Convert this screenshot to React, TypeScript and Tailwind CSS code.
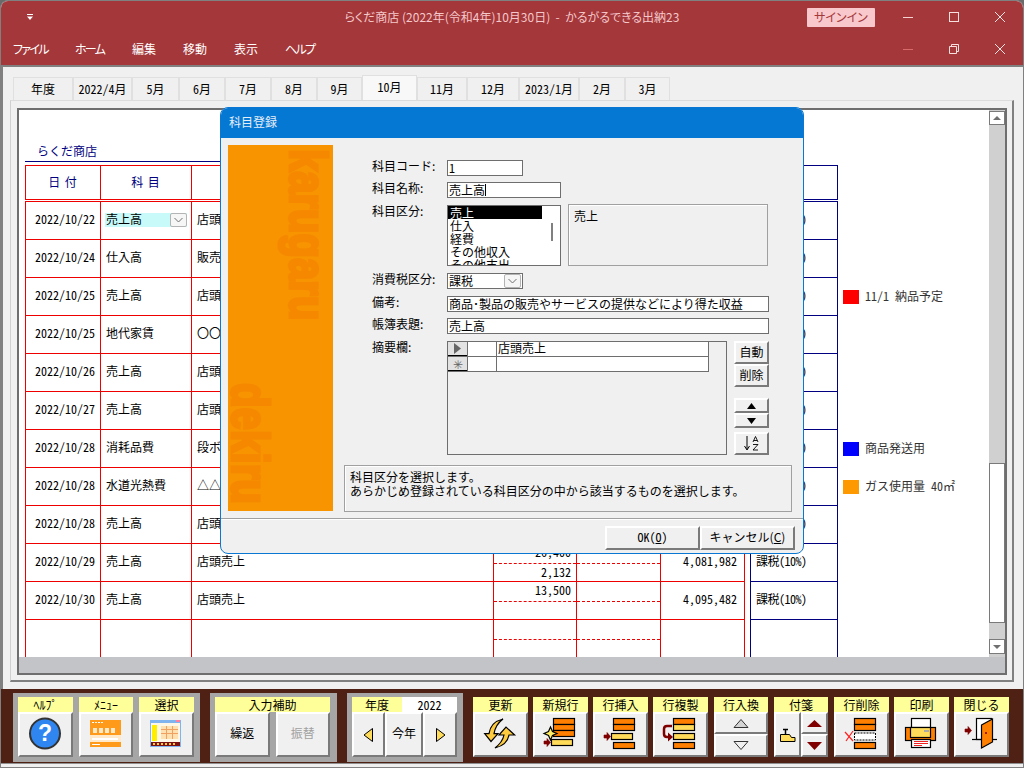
import type { ReactNode } from "react";

const hw = "[font-feature-settings:'hwid']";
const raised = "border-2 border-t-white border-l-white border-r-[#7a7a7a] border-b-[#7a7a7a] bg-[#f0f0f0]";

const tabs = [
  ["年度", "w-[60px]"],
  ["2022/4月", "w-[59px]"],
  ["5月", "w-[47px]"],
  ["6月", "w-[46px]"],
  ["7月", "w-[46px]"],
  ["8月", "w-[46px]"],
  ["9月", "w-[45px]"],
  ["10月", "w-[55px]"],
  ["11月", "w-[50px]"],
  ["12月", "w-[52px]"],
  ["2023/1月", "w-[60px]"],
  ["2月", "w-[46px]"],
  ["3月", "w-[45px]"],
];

const rows = [
  { date: "2022/10/22", acc: "売上高", memo: "店頭売上", combo: true },
  { date: "2022/10/24", acc: "仕入高", memo: "販売用商品" },
  { date: "2022/10/25", acc: "売上高", memo: "店頭売上", mark: "bg-[#ff0000]", note: "11/1 納品予定" },
  { date: "2022/10/25", acc: "地代家賃", memo: "〇〇不動産" },
  { date: "2022/10/26", acc: "売上高", memo: "店頭売上" },
  { date: "2022/10/27", acc: "売上高", memo: "店頭売上" },
  { date: "2022/10/28", acc: "消耗品費", memo: "段ボール", mark: "bg-[#0000ff]", note: "商品発送用" },
  { date: "2022/10/28", acc: "水道光熱費", memo: "△△ガス", mark: "bg-[#ff9900]", note: "ガス使用量 40㎡" },
  { date: "2022/10/28", acc: "売上高", memo: "店頭売上" },
  { date: "2022/10/29", acc: "売上高", memo: "店頭売上", top: "26,400", bottom: "2,132", total: "4,081,982" },
  { date: "2022/10/30", acc: "売上高", memo: "店頭売上", top: "13,500", total: "4,095,482" },
  { date: "", acc: "", memo: "", empty: true },
];

const Chevron = () => (
  <span className="flex h-[14px] w-[17px] shrink-0 items-center justify-center rounded-[2px] border border-[#b4b4b4] bg-[#f6f6f6]">
    <svg width="9" height="6" viewBox="0 0 9 6" fill="none" stroke="#707070">
      <path d="M0.5 1l4 4 4-4" />
    </svg>
  </span>
);

const Row = ({ r }: { r: (typeof rows)[number] }) => (
  <div className="flex h-[38px] shrink-0">
    <div className="flex border-b border-[#ee0000]">
      <div className={`flex w-[76px] items-center border-x border-[#ee0000] pb-[3px] pl-[9px] ${hw}`}>{r.date}</div>
      <div className={`flex w-[91px] items-center border-r border-[#ee0000] pl-[5px] ${r.combo ? "" : "pb-[3px]"}`}>
        {r.combo ? (
          <div className="-ml-px -mt-[2px] flex h-[14px] w-[82px] items-center justify-between bg-[#c8fafa] pl-px">
            <span className="pb-px">{r.acc}</span>
            <Chevron />
          </div>
        ) : (
          r.acc
        )}
      </div>
      <div className="flex w-[302px] items-center border-r border-[#ee0000] pb-[3px] pl-[5px]">{r.memo}</div>
      <div className={`flex w-[83px] flex-col border-r border-[#ee0000] text-right ${hw}`}>
        <div className="h-[20px] border-b border-dashed border-[#ee0000] pr-[5px] leading-[16px]">{r.top}</div>
        <div className="pr-[5px] leading-[15px]">{r.bottom}</div>
      </div>
      <div className="flex w-[84px] flex-col border-r border-[#ee0000]">
        <div className="h-[20px] border-b border-dashed border-[#ee0000]" />
      </div>
      <div className={`flex w-[84px] items-center justify-end border-r border-[#ee0000] pb-[3px] pr-[7px] ${hw}`}>{r.total}</div>
    </div>
    <div className={`ml-[5px] flex w-[88px] items-center border-x border-b border-[#000080] pb-[3px] pl-[5px] tracking-[-0.5px] ${hw}`}>
      {r.empty ? "" : "課税(10%)"}
    </div>
    {r.note && (
      <div className="ml-[5px] flex items-center text-[#333333]">
        <span className={`mr-[6px] h-[14px] w-[16px] ${r.mark}`} />
        <span className={`pb-[3px] ${hw}`}>{r.note}</span>
      </div>
    )}
  </div>
);

const Field = ({ label, className, children }: { label: string; className: string; children: ReactNode }) => (
  <div className={`flex ${className}`}>
    <div className="-mt-px w-[75px] shrink-0 leading-[13px]">{label}</div>
    {children}
  </div>
);

const boxIn = "h-[16px] border border-[#6e6e6e] bg-white pl-px leading-[13px]";

const Tool = ({ label, children, className = "w-[55px]" }: { label: string; children: ReactNode; className?: string }) => (
  <div className={`flex flex-col ${className}`}>
    <div className="flex h-[15px] items-center justify-center bg-[#ffff99] leading-none">{label}</div>
    <div className="flex h-[45px]">{children}</div>
  </div>
);

const Btn = ({ children, className = "" }: { children?: ReactNode; className?: string }) => (
  <div className={`flex min-w-0 flex-1 items-center justify-center overflow-visible ${raised} ${className}`}>{children}</div>
);

const Icon = ({ children }: { children: ReactNode }) => (
  <svg className="-m-[2px] block h-[45px] w-[55px] shrink-0" viewBox="0 0 55 45" stroke="#000" strokeWidth="1.2">
    {children}
  </svg>
);

const OR = "#ff8000";
const YL = "#ffdc5a";
const Arrow = ({ x, y }: { x: number; y: number }) => (
  <path d={`M${x} ${y - 1.5}h3v-2.5l3.5 4-3.5 4v-2.5h-3z`} fill="#800000" stroke="#800000" strokeWidth="0.6" />
);

const WinBtns = ({ menu }: { menu?: boolean }) => (
  <div className="flex">
    <div className="flex h-[32px] w-[46px] items-center justify-center">
      <svg width="10" height="10" stroke={menu ? "#d96a6a" : "#f6d3d3"}>
        <path d="M0 5.5h10" />
      </svg>
    </div>
    <div className="flex h-[32px] w-[46px] items-center justify-center">
      <svg width="10" height="10" fill="none" stroke="#f6e0e0">
        {menu ? (
          <path d="M0.5 2.5h7v7h-7zM2.5 2.5v-2h7v7h-2" />
        ) : (
          <rect x="0.5" y="0.5" width="9" height="9" />
        )}
      </svg>
    </div>
    <div className="flex h-[32px] w-[46px] items-center justify-center">
      <svg width="10" height="10" stroke="#f6e0e0">
        <path d="M0 0l10 10M10 0L0 10" />
      </svg>
    </div>
  </div>
);

export default function App() {
  return (
    <div className="relative h-[768px] w-[1024px] overflow-hidden bg-[#6a6a6a] font-['Noto_Sans_CJK_JP',sans-serif] text-[12px] text-black">
      <div className="flex h-full flex-col rounded-t-[8px] border border-[#808080] bg-[#f0f0f0]">
        {/* title */}
        <div className="grid h-[32px] shrink-0 grid-cols-[1fr_auto_1fr] rounded-t-[7px] bg-[#a4373a] text-[12px] text-[#f4c8ca]">
          <div className="flex items-center pl-[26px]">
            <svg width="6" height="7" fill="#fff">
              <path d="M0 0h6v1H0zM0 2.5h6L3 6z" />
            </svg>
          </div>
          <div className="flex items-center justify-center whitespace-pre [font-feature-settings:'palt']">
            らくだ商店 (2022年(令和4年)10月30日)  -  かるがるできる出納23
          </div>
          <div className="flex items-center justify-end">
            <div className="mr-[10px] flex h-[19px] w-[68px] items-center justify-center rounded-[1px] bg-[#f8c8cc] pb-px text-[12px] text-[#a4373a] [font-feature-settings:'palt']">
              サインイン
            </div>
            <WinBtns />
          </div>
        </div>
        {/* menu */}
        <div className="flex h-[32px] shrink-0 items-center justify-between bg-[#a4373a] text-white">
          <div className="flex pb-px pl-[12px] text-[12px] [font-feature-settings:'palt']">
            <span className="w-[62px] tracking-[-1.7px]">ファイル</span>
            <span className="w-[57px] tracking-[-1.7px]">ホーム</span>
            <span className="w-[51px]">編集</span>
            <span className="w-[51px]">移動</span>
            <span className="w-[51px]">表示</span>
            <span className="tracking-[-1.7px]">ヘルプ</span>
          </div>
          <WinBtns menu />
        </div>
        {/* main */}
        <div className="flex min-h-0 flex-1 flex-col border-t-2 border-l-2 border-[#808080] pt-[8px]">
          <div className="flex h-[25px] shrink-0 items-end pl-[10px]">
            {tabs.map(([t, w]) => (
              <div
                key={t}
                className={`flex items-center justify-center border-x border-t border-[#e0e0e0] ${hw} ${w} ${
                  t === "10月" ? "h-[25px] bg-[#f8f8f8] pb-[2px]" : "h-[23px] bg-[#f0f0f0]"
                }`}
              >
                {t}
              </div>
            ))}
          </div>
          <div className="mb-[7px] ml-[7px] mr-[9px] flex min-h-0 flex-1 flex-col border-t border-l border-t-[#dcdcdc] border-l-[#d0d0d0] border-r-2 border-b-2 border-r-[#808080] border-b-[#808080] pt-[7px] pr-[5px] pb-[5px] pl-[6px]">
            <div className="flex min-h-0 flex-1 flex-col border-2 border-[#6e6e6e] bg-white">
              <div className="flex min-h-0 flex-1">
                <div className="min-w-0 flex-1 overflow-hidden pl-[6px]">
                  <div className="flex h-[52px] w-[600px] items-end border-b border-[#000080] pb-[2px] pl-[12px] leading-[16px] text-[#000080]">
                    らくだ商店
                  </div>
                  <div className="mt-[3px] flex h-[35px]">
                    <div className="flex border-y border-[#ee0000] text-[#000080]">
                      <div className="flex w-[76px] items-center justify-center border-x border-[#ee0000] pb-[2px] tracking-[1px]">日 付</div>
                      <div className="flex w-[91px] items-center justify-center border-r border-[#ee0000] pb-[2px] tracking-[1px]">科 目</div>
                      <div className="w-[302px] border-r border-[#ee0000]" />
                      <div className="w-[83px] border-r border-[#ee0000]" />
                      <div className="w-[84px] border-r border-[#ee0000]" />
                      <div className="w-[84px] border-r border-[#ee0000]" />
                    </div>
                    <div className="ml-[5px] flex w-[88px] items-center border border-[#000080] pb-[2px] pl-[5px] text-[#000080]">課税区分</div>
                  </div>
                  <div className="mt-px flex h-px w-[720px] bg-[#ee0000]" />
                  <div className="-mt-px ml-[725px] h-px w-[88px] bg-[#000080]" />
                  {rows.map((r, i) => (
                    <Row key={i} r={r} />
                  ))}
                </div>
                <div className="flex w-[16px] shrink-0 flex-col bg-[#d0d0d0]">
                  <div className="mt-px flex h-[14px] items-center justify-center border border-[#7a7a7a] bg-white">
                    <svg width="8" height="4" fill="#707070">
                      <path d="M4 0l4 4H0z" />
                    </svg>
                  </div>
                  <div className="mt-[338px] h-[160px] border border-[#7a7a7a] bg-white" />
                  <div className="mt-[16px] flex h-[15px] items-center justify-center border border-[#7a7a7a] bg-white">
                    <svg width="8" height="4" fill="#707070">
                      <path d="M4 4l4-4H0z" />
                    </svg>
                  </div>
                </div>
              </div>
              <div className="h-[16px] shrink-0 bg-[#c3c4c8]" />
            </div>
          </div>
        </div>
        {/* toolbar */}
        <div className="flex h-[74px] shrink-0 gap-[10px] bg-[#4f2114] pl-[12px] pt-[4px]">
          <div className="flex h-[69px] w-[187px] gap-[6px] bg-[#a6a6a6] px-[5px] pt-[4px]">
            <Tool label="ﾍﾙﾌﾟ">
              <Btn>
                <Icon>
                  <circle cx="27" cy="21.5" r="15" fill="#2f86f0" stroke="#333" strokeWidth="2" />
                  <text x="27" y="29" textAnchor="middle" fill="#fff" stroke="none" fontSize="23" fontWeight="700" fontFamily="Liberation Sans">?</text>
                </Icon>
              </Btn>
            </Tool>
            <Tool label="ﾒﾆｭｰ" className="w-[54px]">
              <Btn>
                <Icon>
                  <g stroke="none">
                    <rect x="11" y="8" width="31" height="27" fill="#ffe9c8" />
                    <rect x="11" y="8" width="31" height="15" fill="#ff9a1a" />
                    <path d="M13 10h2v1h-2zM16 10h2v1h-2zM19 10h2v1h-2zM22 10h2v1h-2z" fill="#fff" />
                    <path d="M14 16h4v5h-4zM20 16h4v5h-4zM26 16h4v5h-4zM32 16h4v5h-4z" fill="#ffe9c8" />
                    <rect x="11" y="30" width="31" height="5" fill="#ff9a1a" />
                    <rect x="13" y="26" width="26" height="2" fill="#fff" />
                    <rect x="13" y="32" width="8" height="1" fill="#fff" />
                  </g>
                </Icon>
              </Btn>
            </Tool>
            <Tool label="選択">
              <Btn>
                <Icon>
                  <g stroke="none">
                    <rect x="11" y="8" width="31" height="27" fill="#7fb4ee" />
                    <rect x="12" y="11" width="29" height="19" fill="#fff7e6" />
                    <rect x="13" y="13" width="5" height="16" fill="#ffee00" />
                    <path d="M22 14h17v13H22z" fill="#ffe0b0" />
                    <path d="M22 17h17v1H22zM22 21h17v1H22zM27 14h1v13h-1zM33 14h1v13h-1z" fill="#f0a060" />
                    <rect x="12" y="30" width="29" height="4" fill="#7a1010" />
                    <path d="M14 31h2v2h-2zM18 31h2v2h-2zM22 31h2v2h-2zM26 31h2v2h-2zM30 31h2v2h-2zM34 31h2v2h-2z" fill="#ffcc33" />
                    <rect x="37" y="8" width="4" height="2" fill="#ff80a0" />
                  </g>
                </Icon>
              </Btn>
            </Tool>
          </div>
          <div className="flex h-[69px] w-[127px] bg-[#a6a6a6] pl-[5px] pt-[4px]">
            <Tool label="入力補助" className="w-[115px]">
              <Btn className="mr-[6px] pb-[3px]">繰返</Btn>
              <Btn className="pb-[3px] text-[#a0a0a0]">振替</Btn>
            </Tool>
          </div>
          <div className="flex h-[69px] w-[116px] flex-col bg-[#a6a6a6] pl-[5px] pt-[4px]">
            <div className="flex h-[15px] w-[105px]">
              <div className="flex w-[50px] items-center justify-center bg-[#ffff99]">年度</div>
              <div className={`flex flex-1 items-center justify-center bg-white leading-none ${hw}`}>2022</div>
            </div>
            <div className="flex h-[45px]">
              <Btn className="w-[33px] flex-none">
                <svg width="11" height="14" fill="#ffdc5a" stroke="#000">
                  <path d="M9.5 0.5v13L1 7z" />
                </svg>
              </Btn>
              <Btn className="w-[38px] flex-none pb-[3px]">今年</Btn>
              <Btn className="w-[34px] flex-none">
                <svg width="11" height="14" fill="#ffdc5a" stroke="#000">
                  <path d="M1.5 0.5v13L10 7z" />
                </svg>
              </Btn>
            </div>
          </div>
          <div className="flex h-[69px] gap-[5px] pt-[4px]">
            <Tool label="更新">
              <Btn>
                <Icon>
                  <path d="M30 7C22 9 17 14 16 21.7h-4.3l6.3 7.8 7-7.8h-4c1-6 4-11 9-14.7z" fill="#ffcc40" />
                  <path d="M22 36c8-2 13-7 14-13h5.6l-8.6-8-7 8h5c-1 5-4 9-9 13z" fill="#ffcc40" />
                </Icon>
              </Btn>
            </Tool>
            <Tool label="新規行">
              <Btn>
                <Icon>
                  <rect x="20.5" y="6.5" width="21" height="6" fill={OR} />
                  <rect x="20.5" y="12.5" width="21" height="6" fill={OR} />
                  <rect x="20.5" y="18.5" width="21" height="6" fill={OR} />
                  <rect x="18.5" y="27.5" width="21" height="6" fill={YL} />
                  <path d="M17.5 15l2 4.5 4.5 2-4.5 2-2 4.5-2-4.5-4.5-2 4.5-2z" fill="#ffee66" />
                  <Arrow x={11} y={30.5} />
                </Icon>
              </Btn>
            </Tool>
            <Tool label="行挿入">
              <Btn>
                <Icon>
                  <rect x="20.5" y="6.5" width="21" height="6" fill={OR} />
                  <rect x="20.5" y="12.5" width="21" height="6" fill={OR} />
                  <rect x="18.5" y="21.5" width="21" height="6" fill={YL} />
                  <rect x="20.5" y="30.5" width="21" height="6" fill={OR} />
                  <Arrow x={11} y={24.5} />
                </Icon>
              </Btn>
            </Tool>
            <Tool label="行複製">
              <Btn>
                <Icon>
                  <rect x="20.5" y="6.5" width="21" height="6" fill={OR} />
                  <rect x="20.5" y="12.5" width="21" height="6" fill={YL} />
                  <rect x="20.5" y="21.5" width="21" height="6" fill={YL} />
                  <rect x="20.5" y="30.5" width="21" height="6" fill={OR} />
                  <path d="M19 14h-5q-3 0-3 3v5q0 3 3 3h1" fill="none" stroke="#800000" strokeWidth="2.5" />
                  <path d="M15 20.5l5 4.5-5 4.5z" fill="#800000" stroke="none" />
                </Icon>
              </Btn>
            </Tool>
            <Tool label="行入換" className="ml-px w-[54px]">
              <div className="flex w-full flex-col">
                <Btn className="h-[22px] flex-none">
                  <svg width="16" height="9" fill="#d4d4d4" stroke="#333">
                    <path d="M8 0.5l7 8H1z" />
                  </svg>
                </Btn>
                <Btn className="h-[23px] flex-none">
                  <svg width="16" height="9" fill="#f0f0f0" stroke="#333">
                    <path d="M8 8.5l7-8H1z" />
                  </svg>
                </Btn>
              </div>
            </Tool>
            <Tool label="付箋" className="ml-px w-[54px]">
              <Btn className="w-[27px] flex-none">
                <svg width="16" height="14" stroke="#000" fill={YL}>
                  <path d="M0.5 13.5V6.5h9l2 3h3.500v4z" />
                  <path d="M3 1.5h5M5.5 1.5v5" fill="none" strokeWidth="1.5" />
                </svg>
              </Btn>
              <div className="flex w-[27px] flex-col">
                <Btn className="h-[22px] flex-none">
                  <svg width="15" height="7" fill="#800000">
                    <path d="M7.5 0l7.5 7H0z" />
                  </svg>
                </Btn>
                <Btn className="h-[23px] flex-none">
                  <svg width="15" height="8" fill="#800000">
                    <path d="M7.5 8L15 0H0z" />
                  </svg>
                </Btn>
              </div>
            </Tool>
            <Tool label="行削除" className="ml-px w-[55px]">
              <Btn>
                <Icon>
                  <rect x="20.5" y="6.5" width="21" height="6" fill={OR} />
                  <rect x="20.5" y="12.5" width="21" height="6" fill={OR} />
                  <rect x="20.5" y="21" width="21" height="7" fill="#fff" strokeWidth="1" strokeDasharray="2 1" />
                  <rect x="20.5" y="30.5" width="21" height="6" fill={OR} />
                  <path d="M11 20l8 9M19 19l-7 10" fill="none" stroke="#ff2020" strokeWidth="1.2" />
                </Icon>
              </Btn>
            </Tool>
            <Tool label="印刷">
              <Btn>
                <Icon>
                  <rect x="17.5" y="6.5" width="19" height="10" fill="#fff" />
                  <rect x="11.5" y="15.5" width="30" height="13" fill={OR} />
                  <rect x="16.5" y="15.5" width="20" height="10" fill={YL} />
                  <path d="M30 18h5v2h-5z" fill="#aaa" stroke="none" />
                  <rect x="17.5" y="27.5" width="19" height="8" fill="#fff" />
                  <path d="M20 29.5h14M20 31.5h14M20 33.5h8" stroke="#ee2020" strokeWidth="1" fill="none" />
                </Icon>
              </Btn>
            </Tool>
            <Tool label="閉じる">
              <Btn>
                <Icon>
                  <rect x="22.5" y="6.5" width="15" height="21" fill="#fff" />
                  <path d="M18 27.5h25" />
                  <path d="M27.5 13l11-6v23l-11 6z" fill={OR} />
                  <path d="M31 21h2M32 20v2" stroke="#800000" strokeWidth="1" />
                  <Arrow x={11} y={18.5} />
                </Icon>
              </Btn>
            </Tool>
          </div>
        </div>
        <div className="h-[4px] shrink-0 border-t border-[#909090]" />
      </div>

      {/* dialog */}
      <div className="absolute left-[220px] top-[107px] flex h-[447px] w-[584px] flex-col overflow-hidden rounded-[8px] border border-[#0a78d2] bg-[#f0f0f0]">
        <div className="flex h-[30px] shrink-0 items-center bg-[#0578d3] pb-[2px] pl-[8px] text-[#e6eef8]">科目登録</div>
        <div className="flex flex-1 pl-[7px] pt-[7px]">
          <div className="relative h-[366px] w-[105px] shrink-0 overflow-hidden bg-[#f89400] font-['Liberation_Sans',sans-serif] text-[52px] font-bold leading-none text-[#f68800] [-webkit-text-stroke:3px_#f68800]">
            <div className="absolute left-[54px] top-[4px] origin-top scale-y-[0.77] whitespace-nowrap [writing-mode:vertical-rl]">karugaru</div>
            <div className="absolute left-[-4px] top-[238px] origin-top scale-y-[0.775] whitespace-nowrap [writing-mode:vertical-rl]">dekiru</div>
          </div>
          <div className="ml-[11px] flex w-[448px] flex-col">
            <div className="flex flex-col pl-[28px]">
              <Field label="科目コード:" className="mt-[15px]">
                <div className={`${boxIn} w-[76px] ${hw}`}>1</div>
              </Field>
              <Field label="科目名称:" className="mt-[6px]">
                <div className={`${boxIn} flex w-[114px] items-center`}>
                  <span className="pb-px">売上高</span>
                  <span className="h-[12px] w-px bg-black" />
                </div>
              </Field>
              <Field label="科目区分:" className="mt-[7px]">
                <div className="relative h-[61px] w-[114px] overflow-hidden border border-[#6e6e6e] bg-white leading-[13px]">
                  <div className="w-[94px] bg-black pl-[2px] text-white">売上</div>
                  <div className="pl-[2px]">仕入</div>
                  <div className="pl-[2px]">経費</div>
                  <div className="pl-[2px]">その他収入</div>
                  <div className="pl-[2px]">その他支出</div>
                  <div className="absolute left-[103px] top-[17px] h-[18px] w-[2px] bg-[#808080]" />
                </div>
                <div className="ml-[7px] -mt-px h-[62px] w-[200px] border border-[#a0a0a0] pl-[5px] pt-[2px] shadow-[inset_1px_1px_0_#fff]">売上</div>
              </Field>
              <Field label="消費税区分:" className="mt-[7px]">
                <div className={`${boxIn} flex w-[76px] items-center justify-between pr-px`}>
                  <span className="pb-px">課税</span>
                  <Chevron />
                </div>
              </Field>
              <Field label="備考:" className="mt-[7px]">
                <div className={`${boxIn} w-[322px] whitespace-nowrap`}>商品･製品の販売やサービスの提供などにより得た収益</div>
              </Field>
              <Field label="帳簿表題:" className="mt-[6px]">
                <div className={`${boxIn} w-[322px]`}>売上高</div>
              </Field>
              <Field label="摘要欄:" className="mt-[7px]">
                <div className="h-[114px] w-[280px] border border-[#6e6e6e]">
                  <div className="w-[261px] border-r border-[#6e6e6e]">
                    <div className="flex h-[15px] border-b border-[#6e6e6e] bg-white leading-[12px]">
                      <div className="flex w-[19px] items-center justify-center border-b border-black bg-[#e2e2e2]">
                        <svg width="7" height="11" fill="#666">
                          <path d="M0 0l7 5.5L0 11z" />
                        </svg>
                      </div>
                      <div className="w-[30px] border-x border-[#6e6e6e]" />
                      <div className="pl-px">店頭売上</div>
                    </div>
                    <div className="flex h-[15px] border-b border-[#6e6e6e] bg-white">
                      <div className="flex w-[19px] items-center justify-center border-b border-black bg-[#e2e2e2] leading-none text-[#666]">✳</div>
                      <div className="w-[30px] border-x border-[#6e6e6e]" />
                    </div>
                  </div>
                </div>
                <div className="ml-[7px] flex w-[35px] flex-col">
                  <div className={`flex h-[23px] items-center justify-center pb-[2px] ${raised}`}>自動</div>
                  <div className={`flex h-[23px] items-center justify-center pb-[2px] ${raised}`}>削除</div>
                  <div className={`mt-[11px] flex h-[15px] items-center justify-center ${raised}`}>
                    <svg width="9" height="6" fill="#000">
                      <path d="M4.5 0L9 6H0z" />
                    </svg>
                  </div>
                  <div className={`flex h-[15px] items-center justify-center ${raised}`}>
                    <svg width="9" height="6" fill="#000">
                      <path d="M4.5 6L9 0H0z" />
                    </svg>
                  </div>
                  <div className={`mt-[4px] flex h-[23px] items-center justify-center ${raised}`}>
                    <svg width="18" height="15" fill="none" stroke="#000">
                      <path d="M4 0v13M1.5 10L4 14l2.5-4" />
                      <path d="M10 6l2.5-5.5L15 6M10.8 4.5h3.4M10 8.5h5L10 14h5" strokeWidth="0.9" />
                    </svg>
                  </div>
                </div>
              </Field>
            </div>
            <div className="mt-[10px] h-[47px] border border-[#a0a0a0] pl-[5px] pt-[4px] leading-[14px] shadow-[inset_1px_1px_0_#fff]">
              科目区分を選択します。
              <br />
              あらかじめ登録されている科目区分の中から該当するものを選択します。
            </div>
          </div>
        </div>
        <div className="h-[35px] shrink-0 border-t border-[#a0a0a0] shadow-[inset_0_1px_0_#fff]">
          <div className="mt-[7px] flex h-[24px] justify-end pr-[8px]">
            <div className={`flex w-[95px] items-center justify-center pb-[2px] ${raised} ${hw}`}>
              OK(<u>O</u>)
            </div>
            <div className={`flex w-[95px] items-center justify-center pb-[2px] ${raised}`}>
              キャンセル(<u>C</u>)
            </div>
          </div>
        </div>
      </div>
    </div>
  );
}
